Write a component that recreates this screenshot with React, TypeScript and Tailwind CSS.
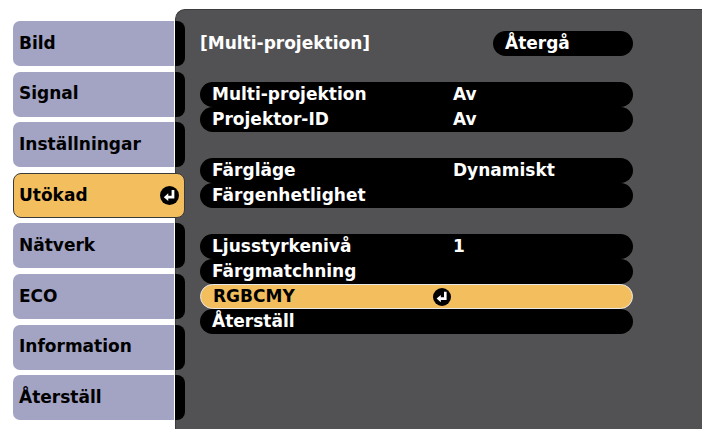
const font = { fontFamily: '"DejaVu Sans", "Liberation Sans", sans-serif' };

const tabs = [
  "Bild",
  "Signal",
  "Inställningar",
  "Utökad",
  "Nätverk",
  "ECO",
  "Information",
  "Återställ",
];

type Row = { label: string; value?: string; selected?: boolean };

const groups: Row[][] = [
  [
    { label: "Multi-projektion", value: "Av" },
    { label: "Projektor-ID", value: "Av" },
  ],
  [
    { label: "Färgläge", value: "Dynamiskt" },
    { label: "Färgenhetlighet" },
  ],
  [
    { label: "Ljusstyrkenivå", value: "1" },
    { label: "Färgmatchning" },
    { label: "RGBCMY", selected: true },
    { label: "Återställ" },
  ],
];

const EnterIcon = ({ size = 19 }: { size?: number }) => (
  <svg
    width={size}
    height={size}
    viewBox="0 0 18 18"
    className="block shrink-0"
  >
    <circle cx="9" cy="9" r="9" fill="#000" />
    <path d="M12.3 3.8 V10.6 H7.2" stroke="#fff" strokeWidth="2.6" fill="none" />
    <path d="M3.6 10.6 L7.8 6.9 L7.8 14.3 Z" fill="#fff" />
  </svg>
);

const App = () => {
  return (
    <div
      className="flex w-[702px] h-[429px] bg-white overflow-hidden text-[17px] font-bold"
      style={font}
    >
      <div className="relative z-10 flex flex-col gap-[5.6px] w-[185px] shrink-0 pl-[13px] pt-[21px]">
        {tabs.map((tab) =>
          tab === "Utökad" ? (
            <div
              key={tab}
              className="flex items-center justify-between h-[45px] w-[172px] bg-[#f3be5e] border border-[#3a3a3a] rounded-[8px] pl-[5px] pr-[5px] text-black"
            >
              <span>{tab}</span>
              <EnterIcon />
            </div>
          ) : (
            <div key={tab} className="flex h-[45px]">
              <div className="flex items-center w-[162px] bg-[#a3a3c3] border-r border-white rounded-l-[7px] pl-[6px] text-black">
                {tab}
              </div>
              <div className="w-[10px] bg-black rounded-r-[8px]" />
            </div>
          )
        )}
      </div>

      <div className="flex-1 -ml-[10px] mt-[9px] bg-[#525254] border-t border-l border-[#3c3c3e] rounded-tl-[10px] pl-[24px] pt-[21px]">
        <div className="w-[433px]">
          <div className="flex items-center justify-between h-[25px] text-white">
            <span>[Multi-projektion]</span>
            <div className="flex items-center w-[140px] h-[25px] bg-black rounded-full pl-[12px]">
              Återgå
            </div>
          </div>

          {groups.map((group, gi) => (
            <div key={gi} className="mt-[26px] flex flex-col">
              {group.map((row) => (
                <div
                  key={row.label}
                  className={`flex items-center h-[25px] rounded-full px-[12px] ${
                    row.selected
                      ? "bg-[#f3be5e] text-black border border-[#e8e8e8]"
                      : "bg-black text-white"
                  }`}
                >
                  <span className="w-[220px] shrink-0 whitespace-nowrap">
                    {row.label}
                  </span>
                  <span className="w-[21px] shrink-0 flex items-center">
                    {row.selected && <EnterIcon size={18} />}
                  </span>
                  <span>{row.value}</span>
                </div>
              ))}
            </div>
          ))}
        </div>
      </div>
    </div>
  );
};

export default App;
